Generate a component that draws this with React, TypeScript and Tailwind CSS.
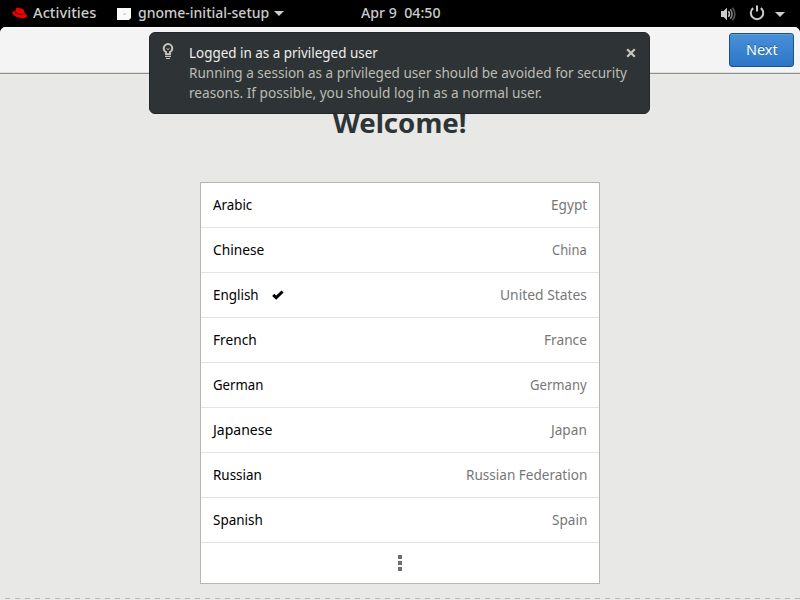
import { useLayoutEffect, useRef, useState } from "react";

type LabelProps = { text: string; width: number; className?: string };

// Condenses a single line of text so that it takes exactly the given width.
function Label({ text, width, className = "" }: LabelProps) {
  const ref = useRef<HTMLSpanElement>(null);
  const [scale, setScale] = useState(1);
  useLayoutEffect(() => {
    if (ref.current) setScale(width / ref.current.offsetWidth);
  }, [width, text]);
  return (
    <span className={`block shrink-0 whitespace-pre ${className}`} style={{ width }}>
      <span ref={ref} className="inline-block origin-left" style={{ transform: `scaleX(${scale})` }}>
        {text}
      </span>
    </span>
  );
}

const languages = [
  { name: "Arabic", nameWidth: 39, country: "Egypt", countryWidth: 36 },
  { name: "Chinese", nameWidth: 51, country: "China", countryWidth: 35 },
  { name: "English", nameWidth: 46, country: "United States", countryWidth: 87, selected: true },
  { name: "French", nameWidth: 44, country: "France", countryWidth: 43 },
  { name: "German", nameWidth: 50, country: "Germany", countryWidth: 57 },
  { name: "Japanese", nameWidth: 59, country: "Japan", countryWidth: 36 },
  { name: "Russian", nameWidth: 49, country: "Russian Federation", countryWidth: 121 },
  { name: "Spanish", nameWidth: 50, country: "Spain", countryWidth: 35 },
];

function TopBar() {
  return (
    <header className="grid h-[27px] shrink-0 grid-cols-[361px_1fr_80px] bg-black text-sm leading-[25px] font-medium text-[#cccccc]">
      <div className="flex h-[27px] items-start pl-3">
        <svg width="16" height="13" viewBox="0 0 16 13" className="mt-[7px] mr-[5px] shrink-0">
          <path
            fill="#e00"
            d="M3.800 2.200C4.200.8 5.200.5 6.600 1.100c1 .4 1.500-.1 2.500.2 1.800.5 2.900 1.500 3.200 3l.4 2c1.400.7 2.500 1.800 2.200 3-.4 1.800-3 2.300-6.100 1.800C5.200 10.600 1.600 8.900.5 6.700c-.9-2 .5-2.800 2.700-2.500z"
          />
          <path d="M3.200 4.300c.5 1.700 5.600 3.600 9.100 2.700l.2.500c-3.700 1.200-9-.8-9.600-2.300z" fill="#210000" />
        </svg>
        <Label text="Activities" width={63} />
        <svg width="15" height="12" viewBox="0 0 15 12" className="mt-2 mr-[6px] ml-[21px] shrink-0">
          <path d="M0 0h14v10l-2 2H0z" fill="#fafafa" />
          <path d="M6 6l1-1h2v2H6z" fill="#d8d8d8" />
        </svg>
        <Label text="gnome-initial-setup" width={131} />
        <svg width="10" height="5" viewBox="0 0 10 5" className="mt-[11px] ml-[5px] shrink-0">
          <path d="M0 0h10L5 5z" fill="#ccc" />
        </svg>
      </div>
      <Label text="Apr 9  04:50" width={80} />
      <div className="flex h-[27px] items-center">
        <svg width="16" height="14" viewBox="0 0 16 14" className="shrink-0" fill="none">
          <path d="M1 4h2.500L7 .8v12.400L3.500 10H1z" fill="#ccc" />
          <path d="M8.300 4.200c1.500 1.500 1.500 4.100 0 5.600" stroke="#ccc" strokeWidth="1.600" />
          <path d="M10.200 2.300c2.500 2.600 2.500 6.800 0 9.400" stroke="#858585" strokeWidth="1.600" />
          <path d="M12.300.7c3.400 3.500 3.400 9.100 0 12.600" stroke="#555" strokeWidth="1.600" />
        </svg>
        <svg width="16" height="16" viewBox="0 0 16 16" className="mb-0.5 ml-[13px] shrink-0" fill="none" stroke="#ccc" strokeWidth="2">
          <path d="M4.200 3.100a6.200 6.200 0 1 0 7.600 0" />
          <path d="M8 .5v6" />
        </svg>
        <svg width="10" height="5" viewBox="0 0 10 5" className="mt-px ml-[10px] shrink-0">
          <path d="M0 0h10L5 5z" fill="#ccc" />
        </svg>
      </div>
    </header>
  );
}

function Notification() {
  return (
    <div className="absolute top-8 left-[149px] flex h-[82px] w-[501px] rounded-md border border-[#222628] bg-[#2e3436] text-sm leading-5">
      <svg width="12" height="17" viewBox="0 0 12 17" className="mt-[10px] ml-3 shrink-0" fill="none" stroke="#c6c5bd">
        <path strokeWidth="2" d="M4 11.200V9.200C2.400 8.300 1.700 7 1.700 5.400a4.300 4.300 0 0 1 8.600 0c0 1.600-.7 2.900-2.300 3.800v2z" />
        <path d="M4.500 5.500 6 6.500l1.500-1M3 13.500h6M4 15.500h4" />
      </svg>
      <div className="mt-[10px] ml-[15px] text-[#bcbcb3]">
        <Label text="Logged in as a privileged user" width={189} className="text-[#eeeeec]" />
        <Label text="Running a session as a privileged user should be avoided for security" width={438} />
        <Label text="reasons. If possible, you should log in as a normal user." width={353} />
      </div>
      <svg width="10" height="10" viewBox="0 0 10 10" className="absolute top-[15px] left-[476px]" stroke="#c6c5bd" strokeWidth="2.200">
        <path d="M1.200 1.200l7.600 7.600M8.800 1.200 1.200 8.800" />
      </svg>
    </div>
  );
}

export default function App() {
  return (
    <div className="relative flex h-[600px] w-[800px] flex-col overflow-hidden bg-black font-['Noto_Sans',sans-serif]">
      <TopBar />
      <div className="flex min-h-0 flex-1 flex-col overflow-hidden rounded-t-md bg-[#e8e8e6]">
        <div className="flex h-[47px] shrink-0 justify-end border-b border-[#91918c] bg-[#f4f4f4] pt-1.5 pr-1.5 shadow-[inset_0_1px_#fff,inset_0_-1px_#dededb]">
          <button className="flex h-[34px] w-[65px] justify-center rounded-[3px] border border-[#1c5187] bg-linear-to-b from-[#4a90d9] to-[#2a76c6] pt-[6px] text-sm leading-5 text-white shadow-[inset_0_1px_#629fdd] [text-shadow:0_-1px_#1e5c99]">
            <Label text="Next" width={32} />
          </button>
        </div>
        <h1 className="mt-[31px] flex h-9 justify-center text-[27px] leading-9 font-bold text-[#2e3436]">
          <Label text="Welcome!" width={134} />
        </h1>
        <ul className="mx-auto mt-[41px] h-[402px] w-[400px] shrink-0 border border-[#b6b6b3] bg-white">
          {languages.map((item) => (
            <li key={item.name} className="flex h-[45px] items-center border-b border-[#e4e4e4] px-3 text-sm leading-5 text-black">
              <Label text={item.name} width={item.nameWidth} />
              {item.selected && (
                <svg width="12" height="10" viewBox="0 0 12 10" className="ml-[13px] shrink-0" fill="none" stroke="black" strokeWidth="3">
                  <path d="m1.200 4.800 3 2.900L10.600 1.500" />
                </svg>
              )}
              <Label text={item.country} width={item.countryWidth} className="ml-auto text-[#777777]" />
            </li>
          ))}
          <li className="flex h-10 flex-col items-center justify-center gap-0.5">
            <span className="size-1 bg-[#6e6e6e]" />
            <span className="size-1 bg-[#6e6e6e]" />
            <span className="size-1 bg-[#6e6e6e]" />
          </li>
        </ul>
        <div className="mt-[14px] h-px shrink-0 bg-[repeating-linear-gradient(90deg,#e8e8e6_0_5px,#b8b8b6_5px_10px)]" />
      </div>
      <Notification />
    </div>
  );
}
